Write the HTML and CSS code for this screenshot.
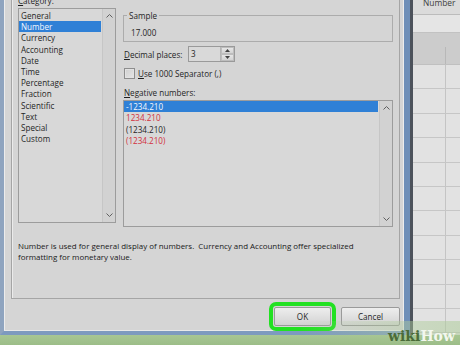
FILE: index.html
```html
<!DOCTYPE html>
<html lang="en">
<head>
<meta charset="utf-8">
<title>Format Cells</title>
<link rel="stylesheet" href="styles.css">
</head>
<body>
<div class="screen">
  <div class="dialog">
    <div class="client">
      <div class="tabpanel">
        <div class="main">
          <div class="catcol">
            <div class="lbl"><u>C</u>ategory:</div>
            <div class="listbox cat-list">
              <ul class="items">
                <li>General</li>
                <li class="sel">Number</li>
                <li>Currency</li>
                <li>Accounting</li>
                <li>Date</li>
                <li>Time</li>
                <li>Percentage</li>
                <li>Fraction</li>
                <li>Scientific</li>
                <li>Text</li>
                <li>Special</li>
                <li>Custom</li>
              </ul>
              <div class="vscroll">
                <svg class="arr" viewBox="0 0 7 4" width="7" height="4"><path d="M0.5 3.5 L3.5 0.5 L6.5 3.5" fill="none" stroke="#606060" stroke-width="1"/></svg>
                <svg class="arr" viewBox="0 0 7 4" width="7" height="4"><path d="M0.5 0.5 L3.5 3.5 L6.5 0.5" fill="none" stroke="#606060" stroke-width="1"/></svg>
              </div>
            </div>
          </div>
          <div class="rightcol">
            <fieldset class="sample">
              <legend>Sample</legend>
              <div class="sample-val">17.000</div>
            </fieldset>
            <div class="row dec">
              <span class="dec-lbl"><u>D</u>ecimal places:</span>
              <div class="spin">
                <span class="spin-val">3</span>
                <div class="spinbtns">
                  <span class="sb"><svg viewBox="0 0 5 3" width="5" height="3"><path d="M0 3 L2.5 0 L5 3 Z" fill="#404040"/></svg></span>
                  <span class="sb"><svg viewBox="0 0 5 3" width="5" height="3"><path d="M0 0 L2.5 3 L5 0 Z" fill="#404040"/></svg></span>
                </div>
              </div>
            </div>
            <div class="row chk">
              <span class="checkbox"></span>
              <span class="chk-lbl"><u>U</u>se 1000 Separator (,)</span>
            </div>
            <div class="lbl neg-lbl"><u>N</u>egative numbers:</div>
            <div class="listbox neg-list">
              <ul class="items">
                <li class="sel">-1234.210</li>
                <li class="red">1234.210</li>
                <li>(1234.210)</li>
                <li class="red">(1234.210)</li>
              </ul>
              <div class="vscroll">
                <svg class="arr" viewBox="0 0 7 4" width="7" height="4"><path d="M0.5 3.5 L3.5 0.5 L6.5 3.5" fill="none" stroke="#606060" stroke-width="1"/></svg>
                <svg class="arr" viewBox="0 0 7 4" width="7" height="4"><path d="M0.5 0.5 L3.5 3.5 L6.5 0.5" fill="none" stroke="#606060" stroke-width="1"/></svg>
              </div>
            </div>
          </div>
        </div>
        <p class="desc">Number is used for general display of numbers.&nbsp; Currency and Accounting offer specialized<br>formatting for monetary value.</p>
      </div>
      <div class="buttons">
        <button class="btn ok">OK</button>
        <button class="btn cancel">Cancel</button>
      </div>
    </div>
  </div>
  <div class="sheet">
    <div class="sh-head"><span>Number</span></div>
    <div class="sh-r1"></div>
    <div class="sh-band"><span class="c1"></span><span class="c2"></span></div>
    <div class="sh-row"><span class="c1"></span><span class="c2"></span></div>
    <div class="sh-row"><span class="c1"></span><span class="c2"></span></div>
    <div class="sh-row"><span class="c1"></span><span class="c2"></span></div>
    <div class="sh-row"><span class="c1"></span><span class="c2"></span></div>
    <div class="sh-row"><span class="c1"></span><span class="c2"></span></div>
    <div class="sh-row"><span class="c1"></span><span class="c2"></span></div>
    <div class="sh-row"><span class="c1"></span><span class="c2"></span></div>
    <div class="sh-row"><span class="c1"></span><span class="c2"></span></div>
    <div class="sh-row"><span class="c1"></span><span class="c2"></span></div>
    <div class="sh-row"><span class="c1"></span><span class="c2"></span></div>
    <div class="sh-row"><span class="c1"></span><span class="c2"></span></div>
    <div class="sh-row"><span class="c1"></span><span class="c2"></span></div>
  </div>
</div>
<div class="fade"></div>
<div class="watermark"><span class="wiki">wiki</span><span class="how">How</span></div>
</body>
</html>
```

FILE: styles.css
```css
* { box-sizing: border-box; }
html, body { margin: 0; padding: 0; }
body {
  width: 460px;
  height: 345px;
  overflow: hidden;
  position: relative;
  background: #d4d4d4;
  font-family: "Open Sans", "Noto Sans", sans-serif;
  font-size: 8.1px;
  line-height: 11px;
  color: #1f1f1f;
}
u { text-decoration: underline; text-underline-offset: 1px; }

.screen { display: flex; height: 345px; }

.dialog {
  flex: none;
  width: 410px;
  height: 335px;
  background: #d5d5d5;
  border-left: 4px solid #8fa4bf;
  border-right: 6px solid #6f8fb8;
  border-bottom: 4px solid #7d9abf;
  box-shadow: inset 1px 0 0 #ececec, inset -1px 0 0 #ededed, inset 0 -1px 0 #e9e9e9;
}
.client {
  height: 331px;
  padding: 0 4px 0 7px;
}
.tabpanel {
  margin-top: -10px;
  height: 309px;
  border: 1px solid #a5a5a5;
  box-shadow: inset 1px 1px 0 #ebebeb;
  padding: 4px 6px 0 6px;
}
.main { display: flex; gap: 7px; }
.catcol { width: 98px; flex: none; }
.rightcol { width: 270px; flex: none; }

.lbl { height: 11px; }

.listbox {
  display: flex;
  border: 1px solid #9c9c9c;
  background: #d8d8d8;
}
.cat-list { margin-top: 2px; height: 215px; }
.items {
  flex: 1;
  list-style: none;
  margin: 0;
  padding: 1px 0 0;
}
.items li {
  height: 11.2px;
  line-height: 11.2px;
  padding-left: 2px;
  white-space: nowrap;
}
.items li.sel { background: #2f80d6; color: #f4f8ff; }
.items li.red { color: #d2303c; }

.vscroll {
  width: 13px;
  flex: none;
  margin-left: 1px;
  background: #d2d2d2;
  border-left: 1px solid #c6c6c6;
  display: flex;
  flex-direction: column;
  justify-content: space-between;
  align-items: center;
  padding: 5px 0 5px;
}
.arr { display: block; }

.sample {
  margin: 14.5px 0 0;
  padding: 0 3px 3.5px;
  border: 1px solid #acacac;
  min-width: 0;
}
.sample legend { padding: 0 2px; line-height: 11px; }
.sample-val { padding: 6px 0 0 4px; height: 17px; }

.row { display: flex; align-items: center; padding-left: 1px; }
.dec { margin-top: 4px; height: 16px; }
.dec-lbl { width: 64px; flex: none; }
.spin {
  width: 47px;
  height: 16px;
  display: flex;
  border: 1px solid #9a9a9a;
  background: #d9d9d9;
}
.spin-val { flex: 1; padding-left: 2px; line-height: 14px; }
.spinbtns {
  width: 14px;
  display: flex;
  flex-direction: column;
  border-left: 1px solid #b5b5b5;
}
.sb {
  flex: 1;
  display: flex;
  align-items: center;
  justify-content: center;
  background: linear-gradient(#e6e6e6, #d3d3d3);
  border: 1px solid #bdbdbd;
}
.sb svg { display: block; }

.chk { margin-top: 6px; height: 11px; }
.checkbox {
  width: 11px;
  height: 11px;
  flex: none;
  border: 1px solid #8d8d8d;
  background: linear-gradient(135deg, #cfcfcf, #e6e6e6);
  box-shadow: inset 0 0 0 1px #e2e2e2;
}
.chk-lbl { margin-left: 3px; }

.neg-lbl { margin-top: 7.5px; padding-left: 1px; }
.neg-list { margin-top: 2.5px; height: 127px; }
.neg-list .items { padding-top: 0; }
.neg-list .items li { height: 11.3px; line-height: 11.3px; }

.desc {
  margin: 13.5px 0 0;
  white-space: nowrap;
  color: #1a1a1a;
  font-size: 7.95px;
}

.buttons {
  display: flex;
  justify-content: flex-end;
  gap: 10px;
  margin-top: 8px;
}
.btn {
  height: 19px;
  padding: 0;
  font: inherit;
  color: #1f1f1f;
  border: 1px solid #9a9a9a;
  border-radius: 2px;
  background: linear-gradient(#eeeeee, #e0e0e0 50%, #d3d3d3);
}
.ok { width: 57px; outline: 4px solid #22e122; outline-offset: 1px; }
.cancel { width: 59px; }

.sheet {
  flex: 1;
  border-left: 3px solid #4c525b;
  background: #e2e2e2;
}
.sh-head {
  height: 18px;
  background: #dbdbdb;
  border-bottom: 1px solid #bcbcbc;
  padding-left: 10px;
  color: #404040;
  font-size: 8.4px;
}
.sh-head span { display: block; margin-top: -3px; }
.sh-r1 {
  height: 18px;
  background: #e5e5e5;
  border-bottom: 1px solid #c2c2c2;
}
.sh-band {
  height: 32px;
  display: flex;
  background: #cccccc;
  border-bottom: 1px solid #c0c0c0;
}
.sh-band .c1 { width: 33px; border-right: 1px solid #b8b8b8; margin-top: 14px; }
.sh-row {
  height: 24.4px;
  display: flex;
  border-bottom: 1px solid #c6c6c6;
}
.c1 { width: 33px; flex: none; border-right: 1px solid #c4c4c4; }
.c2 { flex: 1; }

.fade {
  position: absolute;
  left: 0;
  right: 0;
  bottom: 0;
  height: 24px;
  background:
    linear-gradient(to bottom, rgba(167,198,147,0) 0px, rgba(167,198,147,0) 14px, #a7c693 14px, #9cbd88 24px),
    linear-gradient(to right, rgba(175,205,155,0) 300px, rgba(175,205,155,0.45) 410px, rgba(175,205,155,0.55) 460px);
}
.watermark {
  position: absolute;
  right: 5px;
  bottom: 1px;
  font-family: "DejaVu Serif", serif;
  font-weight: bold;
  font-size: 14px;
  line-height: 16px;
}
.wiki { color: #4a6b39; }
.how { color: #f3f7ee; }
```
